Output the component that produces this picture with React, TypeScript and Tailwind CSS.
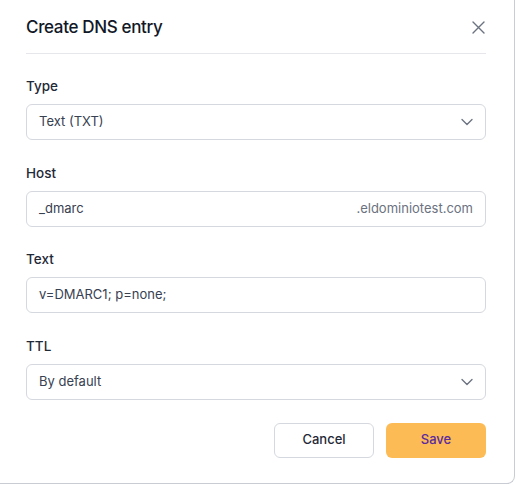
import * as React from 'react';
import { ChevronDown } from 'lucide-react';

const font = { fontFamily: 'Inter, "Noto Sans", sans-serif' };

// Simple labelled field wrapper
const Field = ({ label, children }: { label: string; children: React.ReactNode }) => (
  <div className="flex flex-col">
    <label className="mb-2 text-[13.5px] leading-5 font-medium text-[#1f2937]">{label}</label>
    {children}
  </div>
);

const SelectBox = ({ value }: { value: string }) => (
  <div className="flex h-9 items-center justify-between rounded-md border border-[#d5d8de] bg-white pl-3 pr-2">
    <span className="text-[13px] text-[#374151]">{value}</span>
    <ChevronDown size={20} strokeWidth={1.6} className="text-[#6b7280]" />
  </div>
);

export default function App() {
  return (
    <div className="bg-white" style={font}>
      <div className="flex h-[484px] w-[515px] flex-col rounded-br-lg border-r border-b border-[#c9ccd2] bg-white pl-[26px] pr-[28px]">
        {/* Header */}
        <div className="flex items-center justify-between border-b border-[#e5e7eb] pt-[13px] pb-3">
          <h2 className="text-[17px] leading-7 font-medium tracking-[-0.02em] text-[#111827]">Create DNS entry</h2>
          <button className="flex h-4 w-4 items-center justify-center text-[#6b7280]">
            <svg width="13" height="13" viewBox="0 0 13 13" fill="none" stroke="currentColor" strokeWidth="1.4" strokeLinecap="round">
              <path d="M1 1L12 12M12 1L1 12" />
            </svg>
          </button>
        </div>

        {/* Form */}
        <div className="mt-[22px] flex flex-col gap-[22.5px]">
          <Field label="Type">
            <SelectBox value="Text (TXT)" />
          </Field>
          <Field label="Host">
            <div className="flex h-9 items-center justify-between rounded-md border border-[#d5d8de] bg-white px-3">
              <span className="text-[13px] text-[#374151]">_dmarc</span>
              <span className="text-[13px] text-[#6b7280]">.eldominiotest.com</span>
            </div>
          </Field>
          <Field label="Text">
            <div className="flex h-9 items-center rounded-md border border-[#d5d8de] bg-white px-3">
              <span className="text-[13px] text-[#374151]">v=DMARC1; p=none;</span>
            </div>
          </Field>
          <Field label="TTL">
            <SelectBox value="By default" />
          </Field>
        </div>

        {/* Actions */}
        <div className="mt-[23px] flex justify-end gap-3">
          <button className="h-[35px] w-[100px] rounded-md border border-[#d5d8de] bg-white text-[13px] font-medium text-[#1f2937]">
            Cancel
          </button>
          <button className="h-[35px] w-[100px] rounded-md bg-[#fdbb55] text-[13px] font-medium text-[#5b2a9e]">
            Save
          </button>
        </div>
      </div>
    </div>
  );
}
